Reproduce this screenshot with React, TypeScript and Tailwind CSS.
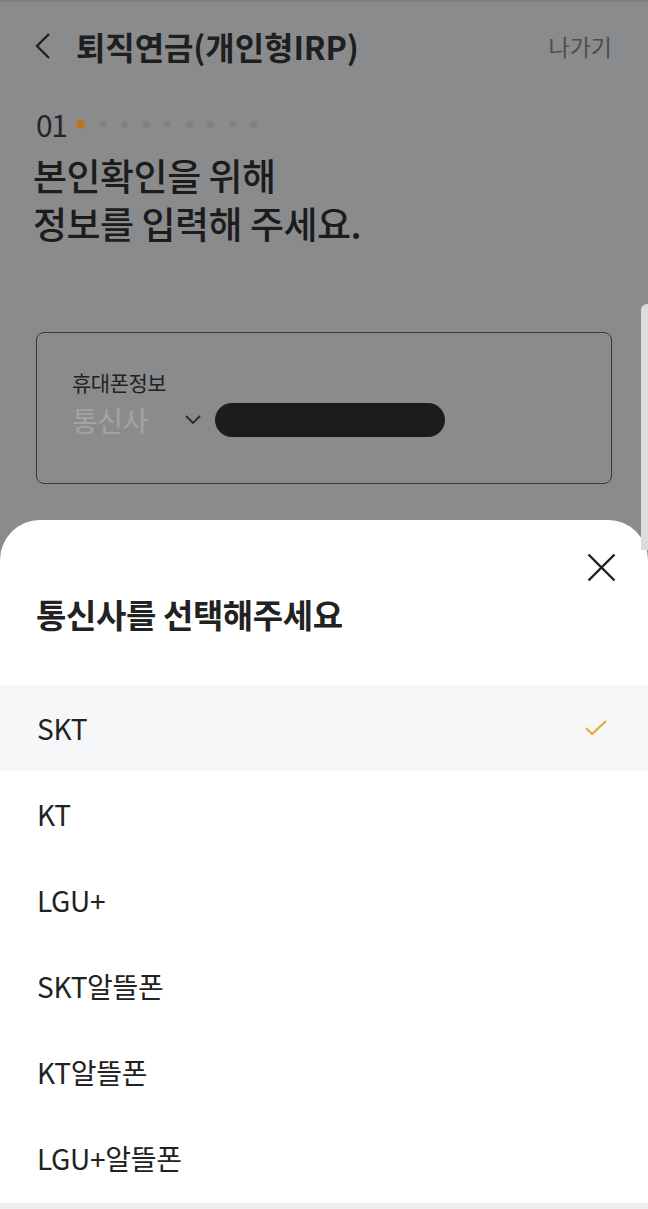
import React from "react";

const carriers = ["SKT", "KT", "LGU+", "SKT알뜰폰", "KT알뜰폰", "LGU+알뜰폰"];

const App = () => {
  return (
    <div
      className="relative flex h-[1209px] w-[648px] flex-col overflow-hidden border-t-2 border-[#7e7f81] bg-[#8a8b8d]"
      style={{ fontFamily: "'Noto Sans CJK KR', 'Noto Sans', sans-serif" }}
    >
      {/* dimmed page behind the sheet */}
      <div className="h-[518px] px-[36px]">
        <div className="flex h-[88px] items-center justify-between">
          <div className="flex items-center">
            <svg width="16" height="28" viewBox="0 0 16 28" className="-ml-[1px]">
              <polyline points="14,2 2,14 14,26" fill="none" stroke="#222" strokeWidth="2.4" />
            </svg>
            <h1 className="ml-[25px] text-[32px] font-bold tracking-[-0.1px] text-[#1f1f1f]">
              퇴직연금(개인형IRP)
            </h1>
          </div>
          <span className="text-[23px] text-[#4d4d4f]">나가기</span>
        </div>

        <div className="mt-[20px] flex h-[28px] items-center">
          <span className="text-[30px] font-normal leading-[28px] tracking-[-1.5px] text-[#262626]">01</span>
          <div className="ml-[10px] flex items-center gap-[14.5px]">
            <span className="h-[9px] w-[9px] rounded-full bg-[#c4721f]" />
            {[0, 1, 2, 3, 4, 5, 6, 7].map((i) => (
              <span key={i} className="h-[7px] w-[7px] rounded-full bg-[#808183]" />
            ))}
          </div>
        </div>

        <h2 className="mt-[15px] -ml-[3px] flex flex-col gap-[4px] text-[37px] font-medium tracking-[-0.5px] text-[#1c1c1c]">
          <span className="leading-[44px]">본인확인을 위해</span>
          <span className="leading-[44px]">정보를 입력해 주세요.</span>
        </h2>

        <div className="mt-[87px] h-[152px] rounded-[8px] border-[1.5px] border-[#3a3a3b] px-[35px] pt-[37px]">
          <div className="text-[21px] leading-[24px] tracking-[-0.5px] text-[#222]">휴대폰정보</div>
          <div className="mt-[8px] flex h-[36px] items-center">
            <span className="text-[28px] tracking-[-0.5px] text-[#a2a3a5]">통신사</span>
            <svg width="16" height="10" viewBox="0 0 16 10" className="ml-[37px]">
              <polyline points="1,1 8,8 15,1" fill="none" stroke="#2a2a2a" strokeWidth="1.8" />
            </svg>
            <span className="ml-[14px] h-[34px] w-[230px] rounded-full bg-[#1c1c1c]" />
          </div>
        </div>
      </div>

      {/* bottom sheet */}
      <div className="flex flex-1 flex-col rounded-t-[40px] bg-white">
        <div className="h-[165px] pl-[37px] pr-[32px] pt-[33px]">
          <div className="flex justify-end">
            <svg width="29" height="29" viewBox="0 0 29 29">
              <line x1="1.5" y1="1.5" x2="27.5" y2="27.5" stroke="#1f1f1f" strokeWidth="2.4" />
              <line x1="27.5" y1="1.5" x2="1.5" y2="27.5" stroke="#1f1f1f" strokeWidth="2.4" />
            </svg>
          </div>
          <h3 className="mt-[12px] -ml-[1px] text-[33px] font-bold leading-[40px] tracking-[-0.4px] text-[#222]">
            통신사를 선택해주세요
          </h3>
        </div>

        <ul className="flex flex-col">
          {carriers.map((name, i) => (
            <li
              key={name}
              className={`flex h-[86px] items-center justify-between pl-[37px] pr-[40px] text-[28px] tracking-[-0.3px] text-[#222] ${
                i === 0 ? "bg-[#f6f7f9]" : ""
              }`}
            >
              <span>{name}</span>
              {i === 0 && (
                <svg width="24" height="18" viewBox="0 0 24 18">
                  <polyline points="2,9 8,15 22,2" fill="none" stroke="#e9aa3c" strokeWidth="2.2" />
                </svg>
              )}
            </li>
          ))}
        </ul>
        <div className="mt-auto h-[6px] bg-[#efefef]" />
      </div>

      <div className="absolute right-0 top-[302px] h-[246px] w-[7px] rounded-tl-[6px] bg-[#dcdcdc]" />
    </div>
  );
};

export default App;
